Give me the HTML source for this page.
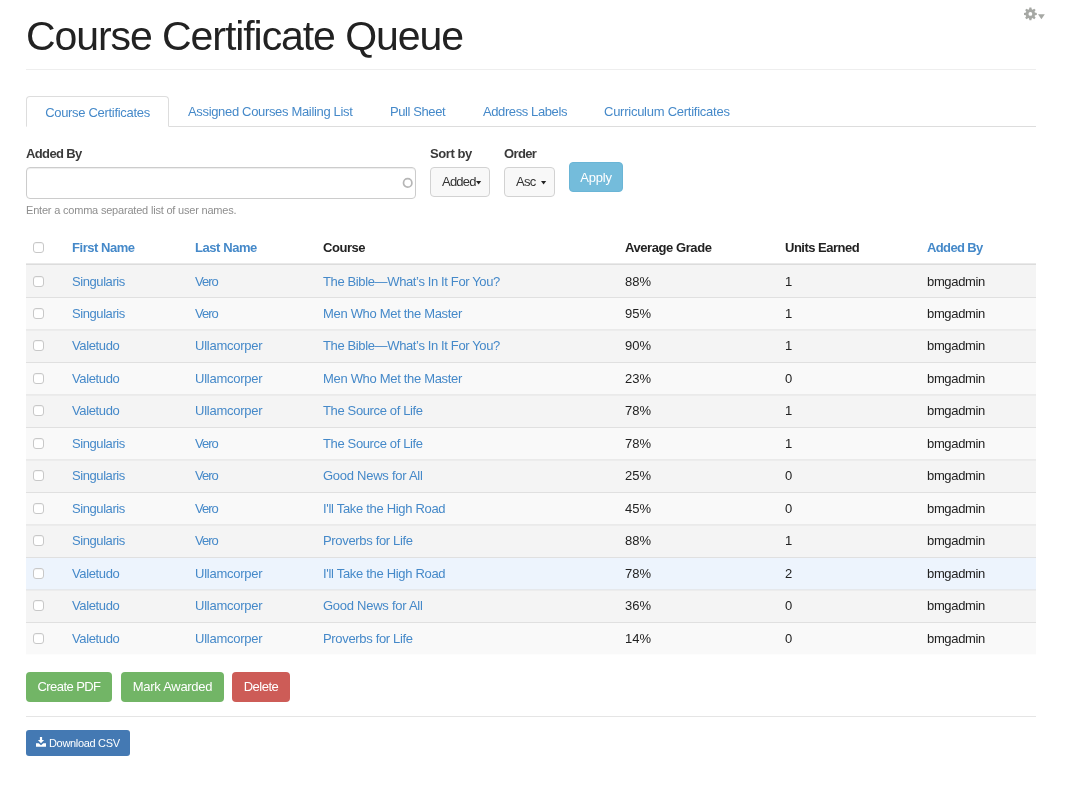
<!DOCTYPE html>
<html lang="en">
<head>
<meta charset="utf-8">
<title>Course Certificate Queue</title>
<style>
*{box-sizing:border-box}
html,body{margin:0;padding:0;background:#fff}
body{width:1070px;height:800px;overflow:hidden;font-family:"Liberation Sans",Arial,sans-serif;font-size:13px;line-height:18px;color:#222;position:relative}
a{color:#4589c9;text-decoration:none}
.wrap{position:absolute;left:26px;top:0;width:1010px;will-change:transform}
h1{position:absolute;left:0;top:13px;margin:0;font-weight:400;font-size:41px;line-height:46px;color:#222;white-space:nowrap;letter-spacing:0}
.hr1{position:absolute;left:0;top:69px;width:1010px;height:1px;background:#eee}
.gear{position:absolute;left:997px;top:6px;line-height:0}
.tabs{position:absolute;left:0;top:96px;width:1010px;height:31px;border-bottom:1px solid #ddd}
.tabs a{position:absolute;top:0;height:31px;line-height:32px;font-size:13px;white-space:nowrap}
.tabs a.active{left:0;width:143px;border:1px solid #ddd;border-bottom-color:#fff;border-radius:4px 4px 0 0;text-align:center;height:31px;line-height:32px}
label.l{position:absolute;font-weight:700;font-size:13px;color:#3a3a3a;top:145px;line-height:18px}
.inp{position:absolute;left:0;top:167px;width:390px;height:32px;border:1px solid #ccc;border-radius:4px;box-shadow:inset 0 1px 1px rgba(0,0,0,.075)}
.inp svg{position:absolute;left:374px;top:8px}
.help{position:absolute;left:0;top:203px;font-size:11px;color:#8e8e8e;line-height:14px}
.dd{position:absolute;top:167px;height:30px;border:1px solid #ccc;border-radius:4px;font-size:13px;color:#333;line-height:28px;padding-left:11px;background:#f8f8f8;border-color:#d2d2d2}
.caret{position:absolute;top:12.5px}
.apply{position:absolute;left:543px;top:162px;width:54px;height:30px;background:#74bcdb;border:1px solid #6ab5d6;border-radius:4px;color:#fff;text-align:center;line-height:30px;font-size:13px}
.th,.td{position:absolute;white-space:nowrap;line-height:18px;font-size:13px}
.th{font-weight:700;top:239px}
span.th,span.td{color:#222}
.hb{position:absolute;left:0;top:263px;width:1010px;height:2px;background:linear-gradient(#e9e9e9 50%,#dcdcdc 50%)}
.row{position:absolute;left:0;width:1010px;border-top:1px solid #e0e0e0;background:#f9f9f9}
.row.o{background:#f4f4f4}
.row.h{background:#edf4fd}
.td{top:7px}
.c1{left:46px}.c2{left:169px}.c3{left:297px}.c4{left:599px}.c5{left:759px}.c6{left:901px}
.cb{position:absolute;left:7px;width:11px;height:11px;border:1px solid #c8c8c8;border-radius:3px;background:#fff;box-shadow:inset 0 1px 0 rgba(0,0,0,.04)}
.btn{position:absolute;top:672px;height:30px;border-radius:4px;color:#fff;text-align:center;line-height:30px;font-size:13px}
.hr2{position:absolute;left:0;top:716px;width:1010px;height:1px;background:#e5e5e5}
.csv{position:absolute;left:0;top:730px;width:104px;height:26px;background:#4479b3;border-radius:3px;color:#fff;font-size:11px;line-height:26px;padding-left:23px;white-space:nowrap}
.csv svg{position:absolute;left:10px;top:7px}
</style>
</head>
<body>
<div class="wrap">
<h1><span style="letter-spacing:-1.071px">Course Certificate Queue</span></h1>
<div class="gear"><svg width="24" height="16" viewBox="0 0 24 16"><g transform="translate(7.4,7.9)" fill="#a6a8a4"><path d="M-1.55-3.5L-1-6.4H1L1.55-3.5z" transform="rotate(0)"/><path d="M-1.55-3.5L-1-6.4H1L1.55-3.5z" transform="rotate(45)"/><path d="M-1.55-3.5L-1-6.4H1L1.55-3.5z" transform="rotate(90)"/><path d="M-1.55-3.5L-1-6.4H1L1.55-3.5z" transform="rotate(135)"/><path d="M-1.55-3.5L-1-6.4H1L1.55-3.5z" transform="rotate(180)"/><path d="M-1.55-3.5L-1-6.4H1L1.55-3.5z" transform="rotate(225)"/><path d="M-1.55-3.5L-1-6.4H1L1.55-3.5z" transform="rotate(270)"/><path d="M-1.55-3.5L-1-6.4H1L1.55-3.5z" transform="rotate(315)"/><path fill-rule="evenodd" d="M0-4.6a4.6 4.6 0 1 0 0 9.2a4.6 4.6 0 1 0 0-9.2zM0-1.9a1.9 1.9 0 1 1 0 3.8a1.9 1.9 0 1 1 0-3.8z"/></g><path d="M15 8.2h6.8l-3.4 5z" fill="#a6a8a4"/></svg></div>
<div class="hr1"></div>
<div class="tabs">
<a class="active"><span style="letter-spacing:-0.308px">Course Certificates</span></a>
<a style="left:162px"><span style="letter-spacing:-0.334px">Assigned Courses Mailing List</span></a>
<a style="left:364px"><span style="letter-spacing:-0.407px">Pull Sheet</span></a>
<a style="left:457px"><span style="letter-spacing:-0.402px">Address Labels</span></a>
<a style="left:578px"><span style="letter-spacing:-0.254px">Curriculum Certificates</span></a>
</div>
<label class="l" style="left:0"><span style="letter-spacing:-0.625px">Added By</span></label>
<label class="l" style="left:404px"><span style="letter-spacing:-0.416px">Sort by</span></label>
<label class="l" style="left:478px"><span style="letter-spacing:-0.627px">Order</span></label>
<div class="inp"><svg width="14" height="14" viewBox="0 0 14 14"><circle cx="6.7" cy="6.9" r="4.2" fill="none" stroke="#b6b6b6" stroke-width="1.7"/></svg></div>
<div class="help"><span style="letter-spacing:-0.197px">Enter a comma separated list of user names.</span></div>
<div class="dd" style="left:404px;width:60px"><span style="letter-spacing:-0.773px">Added</span><svg class="caret" style="left:45px" width="6" height="4" viewBox="0 0 6 4"><path d="M0 0h5.2L2.6 3.4z" fill="#222"/></svg></div>
<div class="dd" style="left:478px;width:51px"><span style="letter-spacing:-0.736px">Asc</span><svg class="caret" style="left:35.6px" width="6" height="4" viewBox="0 0 6 4"><path d="M0 0h5.2L2.6 3.4z" fill="#222"/></svg></div>
<div class="apply"><span style="letter-spacing:-0.233px">Apply</span></div>
<span class="cb" style="top:242px"></span><a class="th c1"><span style="letter-spacing:-0.456px">First Name</span></a><a class="th c2"><span style="letter-spacing:-0.431px">Last Name</span></a><span class="th c3"><span style="letter-spacing:-0.439px">Course</span></span><span class="th c4"><span style="letter-spacing:-0.426px">Average Grade</span></span><span class="th c5"><span style="letter-spacing:-0.499px">Units Earned</span></span><a class="th c6"><span style="letter-spacing:-0.625px">Added By</span></a><div class="hb"></div>
<div class="row o" style="top:265px;height:32px;border-top:0"><span class="cb" style="top:11px"></span><a class="td c1" style="top:8px"><span style="letter-spacing:-0.422px">Singularis</span></a><a class="td c2" style="top:8px"><span style="letter-spacing:-0.983px">Vero</span></a><a class="td c3" style="top:8px"><span style="letter-spacing:-0.369px">The Bible—What’s In It For You?</span></a><span class="td c4" style="top:8px">88%</span><span class="td c5" style="top:8px">1</span><span class="td c6" style="top:8px"><span style="letter-spacing:-0.343px">bmgadmin</span></span></div>
<div class="row" style="top:297px;height:32px"><span class="cb" style="top:10px"></span><a class="td c1" style="top:7px"><span style="letter-spacing:-0.422px">Singularis</span></a><a class="td c2" style="top:7px"><span style="letter-spacing:-0.983px">Vero</span></a><a class="td c3" style="top:7px"><span style="letter-spacing:-0.317px">Men Who Met the Master</span></a><span class="td c4" style="top:7px">95%</span><span class="td c5" style="top:7px">1</span><span class="td c6" style="top:7px"><span style="letter-spacing:-0.343px">bmgadmin</span></span></div>
<div class="row o" style="top:329px;height:33px;border-top-color:#eaeaea;box-shadow:inset 0 1px 0 #ececec"><span class="cb" style="top:10px"></span><a class="td c1" style="top:7px"><span style="letter-spacing:-0.366px">Valetudo</span></a><a class="td c2" style="top:7px"><span style="letter-spacing:-0.248px">Ullamcorper</span></a><a class="td c3" style="top:7px"><span style="letter-spacing:-0.369px">The Bible—What’s In It For You?</span></a><span class="td c4" style="top:7px">90%</span><span class="td c5" style="top:7px">1</span><span class="td c6" style="top:7px"><span style="letter-spacing:-0.343px">bmgadmin</span></span></div>
<div class="row" style="top:362px;height:32px"><span class="cb" style="top:10px"></span><a class="td c1" style="top:7px"><span style="letter-spacing:-0.366px">Valetudo</span></a><a class="td c2" style="top:7px"><span style="letter-spacing:-0.248px">Ullamcorper</span></a><a class="td c3" style="top:7px"><span style="letter-spacing:-0.317px">Men Who Met the Master</span></a><span class="td c4" style="top:7px">23%</span><span class="td c5" style="top:7px">0</span><span class="td c6" style="top:7px"><span style="letter-spacing:-0.343px">bmgadmin</span></span></div>
<div class="row o" style="top:394px;height:33px;border-top-color:#eaeaea;box-shadow:inset 0 1px 0 #ececec"><span class="cb" style="top:10px"></span><a class="td c1" style="top:7px"><span style="letter-spacing:-0.366px">Valetudo</span></a><a class="td c2" style="top:7px"><span style="letter-spacing:-0.248px">Ullamcorper</span></a><a class="td c3" style="top:7px"><span style="letter-spacing:-0.361px">The Source of Life</span></a><span class="td c4" style="top:7px">78%</span><span class="td c5" style="top:7px">1</span><span class="td c6" style="top:7px"><span style="letter-spacing:-0.343px">bmgadmin</span></span></div>
<div class="row" style="top:427px;height:32px"><span class="cb" style="top:10px"></span><a class="td c1" style="top:7px"><span style="letter-spacing:-0.422px">Singularis</span></a><a class="td c2" style="top:7px"><span style="letter-spacing:-0.983px">Vero</span></a><a class="td c3" style="top:7px"><span style="letter-spacing:-0.361px">The Source of Life</span></a><span class="td c4" style="top:7px">78%</span><span class="td c5" style="top:7px">1</span><span class="td c6" style="top:7px"><span style="letter-spacing:-0.343px">bmgadmin</span></span></div>
<div class="row o" style="top:459px;height:33px;border-top-color:#eaeaea;box-shadow:inset 0 1px 0 #ececec"><span class="cb" style="top:10px"></span><a class="td c1" style="top:7px"><span style="letter-spacing:-0.422px">Singularis</span></a><a class="td c2" style="top:7px"><span style="letter-spacing:-0.983px">Vero</span></a><a class="td c3" style="top:7px"><span style="letter-spacing:-0.265px">Good News for All</span></a><span class="td c4" style="top:7px">25%</span><span class="td c5" style="top:7px">0</span><span class="td c6" style="top:7px"><span style="letter-spacing:-0.343px">bmgadmin</span></span></div>
<div class="row" style="top:492px;height:32px"><span class="cb" style="top:10px"></span><a class="td c1" style="top:7px"><span style="letter-spacing:-0.422px">Singularis</span></a><a class="td c2" style="top:7px"><span style="letter-spacing:-0.983px">Vero</span></a><a class="td c3" style="top:7px"><span style="letter-spacing:-0.311px">I'll Take the High Road</span></a><span class="td c4" style="top:7px">45%</span><span class="td c5" style="top:7px">0</span><span class="td c6" style="top:7px"><span style="letter-spacing:-0.343px">bmgadmin</span></span></div>
<div class="row o" style="top:524px;height:33px;border-top-color:#eaeaea;box-shadow:inset 0 1px 0 #ececec"><span class="cb" style="top:10px"></span><a class="td c1" style="top:7px"><span style="letter-spacing:-0.422px">Singularis</span></a><a class="td c2" style="top:7px"><span style="letter-spacing:-0.983px">Vero</span></a><a class="td c3" style="top:7px"><span style="letter-spacing:-0.33px">Proverbs for Life</span></a><span class="td c4" style="top:7px">88%</span><span class="td c5" style="top:7px">1</span><span class="td c6" style="top:7px"><span style="letter-spacing:-0.343px">bmgadmin</span></span></div>
<div class="row h" style="top:557px;height:32px"><span class="cb" style="top:10px"></span><a class="td c1" style="top:7px"><span style="letter-spacing:-0.366px">Valetudo</span></a><a class="td c2" style="top:7px"><span style="letter-spacing:-0.248px">Ullamcorper</span></a><a class="td c3" style="top:7px"><span style="letter-spacing:-0.311px">I'll Take the High Road</span></a><span class="td c4" style="top:7px">78%</span><span class="td c5" style="top:7px">2</span><span class="td c6" style="top:7px"><span style="letter-spacing:-0.343px">bmgadmin</span></span></div>
<div class="row o" style="top:589px;height:33px;border-top-color:#e5e8ec;box-shadow:inset 0 1px 0 #ececec"><span class="cb" style="top:10px"></span><a class="td c1" style="top:7px"><span style="letter-spacing:-0.366px">Valetudo</span></a><a class="td c2" style="top:7px"><span style="letter-spacing:-0.248px">Ullamcorper</span></a><a class="td c3" style="top:7px"><span style="letter-spacing:-0.265px">Good News for All</span></a><span class="td c4" style="top:7px">36%</span><span class="td c5" style="top:7px">0</span><span class="td c6" style="top:7px"><span style="letter-spacing:-0.343px">bmgadmin</span></span></div>
<div class="row" style="top:622px;height:32px"><span class="cb" style="top:10px"></span><a class="td c1" style="top:7px"><span style="letter-spacing:-0.366px">Valetudo</span></a><a class="td c2" style="top:7px"><span style="letter-spacing:-0.248px">Ullamcorper</span></a><a class="td c3" style="top:7px"><span style="letter-spacing:-0.33px">Proverbs for Life</span></a><span class="td c4" style="top:7px">14%</span><span class="td c5" style="top:7px">0</span><span class="td c6" style="top:7px"><span style="letter-spacing:-0.343px">bmgadmin</span></span></div>
<div style="position:absolute;left:0;top:654px;width:1010px;height:1px;background:#fdfdfd"></div>
<div class="btn" style="left:0;width:86px;background:#72b566"><span style="letter-spacing:-0.571px">Create PDF</span></div>
<div class="btn" style="left:95px;width:103px;background:#72b566"><span style="letter-spacing:-0.287px">Mark Awarded</span></div>
<div class="btn" style="left:206px;width:58px;background:#cd5c57"><span style="letter-spacing:-0.516px">Delete</span></div>
<div class="hr2"></div>
<div class="csv"><svg width="10" height="10" viewBox="0 0 10 10"><path d="M3.9 0h2.2v3.1h2L5 6.3 1.9 3.1h2zM0 6.2h2.7L5 8.2l2.3-2H10v3.5H0z" fill="#fff"/></svg><span style="letter-spacing:-0.327px">Download CSV</span></div>
</div>
</body>
</html>
